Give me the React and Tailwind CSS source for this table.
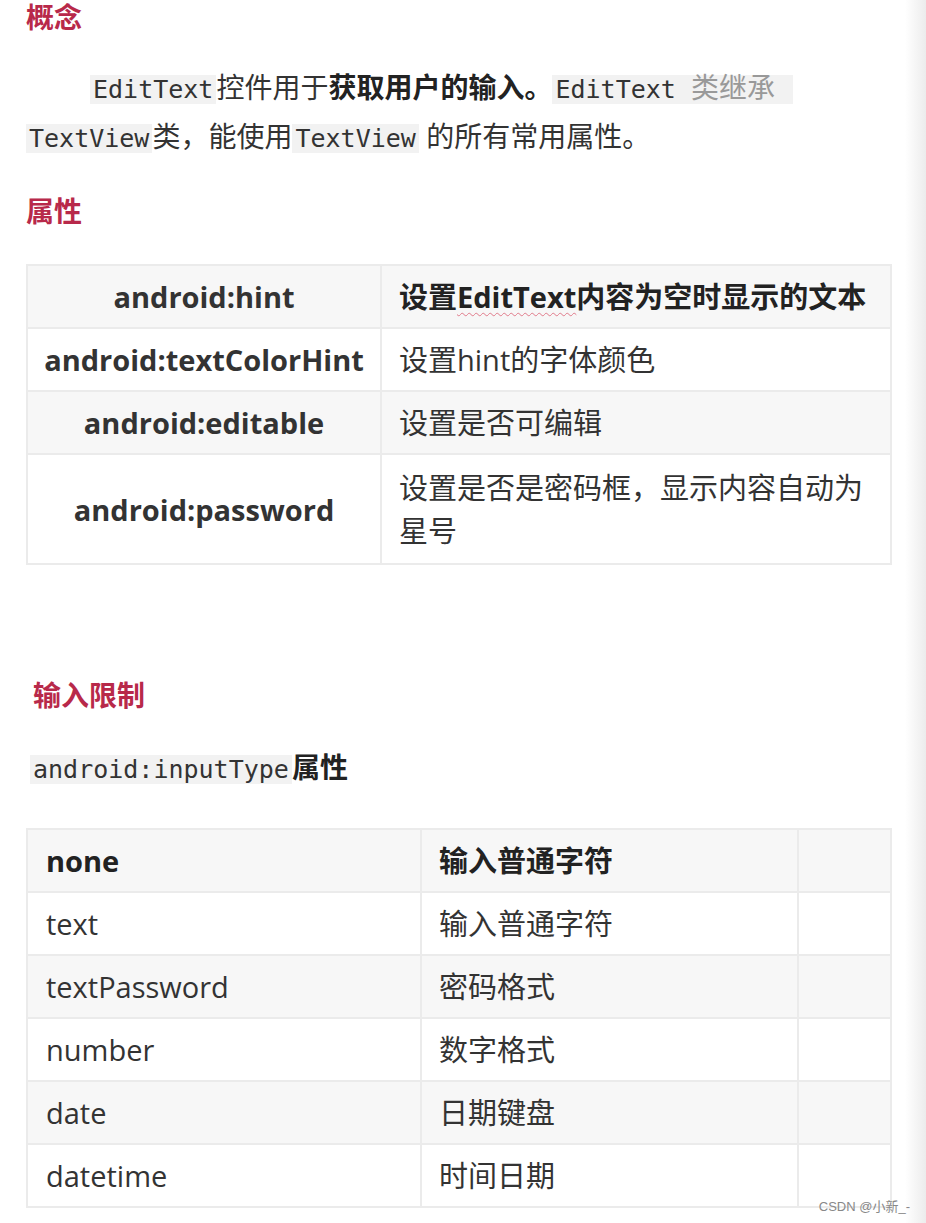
import React from "react";

const cjk = '"Open Sans", "Noto Sans CJK SC", sans-serif';
const mono = '"DejaVu Sans Mono", "Noto Sans CJK SC", monospace';

const attrRows = [
    { name: "android:textColorHint", desc: "设置hint的字体颜色" },
    { name: "android:editable", desc: "设置是否可编辑" },
    { name: "android:password", desc: "设置是否是密码框，显示内容自动为星号", tall: true },
];

const typeRows = [
    ["text", "输入普通字符"],
    ["textPassword", "密码格式"],
    ["number", "数字格式"],
    ["date", "日期键盘"],
    ["datetime", "时间日期"],
];

function Heading({ children, className = "" }) {
    return (
        <h2 className={`text-[28px] leading-[34px] font-bold text-[#b8294a] ${className}`}>
            {children}
        </h2>
    );
}

function Code({ children }) {
    return (
        <span className="bg-[#f2f2f2] px-[3px] text-[25px] text-[#333]" style={{ fontFamily: mono }}>
            {children}
        </span>
    );
}

export default function App() {
    return (
        <div className="relative flex min-h-[1223px] w-[926px] bg-white text-[#333]" style={{ fontFamily: cjk }}>
            <main className="w-[905px] shrink-0 pl-[26px]">
                {/* 概念 */}
                <Heading>概念</Heading>
                <p className="mt-[30px] text-[28px] leading-[47px] indent-[64px]">
                    <Code>EditText</Code>控件用于<b className="font-bold text-[#222]">获取用户的输入。</b>
                    <span className="bg-[#f2f2f2] px-[3px] text-[25px]" style={{ fontFamily: mono }}>
                        EditText <span className="text-[28px] text-[#999]" style={{ fontFamily: cjk }}>类继承</span>&nbsp;
                    </span>
                    <br />
                    <Code>TextView</Code>类，能使用<Code>TextView</Code> 的所有常用属性。
                </p>

                {/* 属性 */}
                <Heading className="mt-[32px]">属性</Heading>
                <table className="mt-[36px] w-[866px] border-collapse text-[29px] leading-[43px]">
                    <tbody>
                        <tr className="bg-[#f7f7f7]">
                            <td className="w-[354px] border-2 border-[#ebebeb] py-[9px] text-center font-bold text-[#333]">
                                android:hint
                            </td>
                            <td className="border-2 border-[#ebebeb] px-[17px] py-[9px] font-bold text-[#222]">
                                设置
                                <span className="underline decoration-wavy decoration-[#e07a8a] decoration-1 underline-offset-4">
                                    EditText
                                </span>
                                内容为空时显示的文本
                            </td>
                        </tr>
                        {attrRows.map((row, i) => (
                            <tr key={row.name} className={i % 2 === 1 ? "bg-[#f7f7f7]" : "bg-white"}>
                                <td className="border-2 border-[#ebebeb] py-[9px] text-center font-bold text-[#333]">
                                    {row.name}
                                </td>
                                <td className={`border-2 border-[#ebebeb] px-[17px] ${row.tall ? "py-[11px]" : "py-[9px]"}`}>
                                    {row.desc}
                                </td>
                            </tr>
                        ))}
                    </tbody>
                </table>

                {/* 输入限制 */}
                <Heading className="mt-[113px] pl-[7px]">输入限制</Heading>
                <p className="mt-[35px] pl-[4px] text-[28px] leading-[40px]">
                    <Code>android:inputType</Code>
                    <span className="font-bold text-[#222]">属性</span>
                </p>

                <table className="mt-[38px] w-[866px] border-collapse text-[29px] leading-[43px]">
                    <tbody>
                        <tr className="bg-[#f7f7f7] font-bold text-[#222]">
                            <td className="w-[394px] border-2 border-[#ebebeb] px-[18px] py-[9px]">none</td>
                            <td className="w-[377px] border-2 border-[#ebebeb] px-[17px] py-[9px]">输入普通字符</td>
                            <td className="border-2 border-[#ebebeb]"></td>
                        </tr>
                        {typeRows.map(([type, desc], i) => (
                            <tr key={type} className={i % 2 === 1 ? "bg-[#f7f7f7]" : "bg-white"}>
                                <td className="border-2 border-[#ebebeb] px-[18px] py-[9px]">{type}</td>
                                <td className="border-2 border-[#ebebeb] px-[17px] py-[9px]">{desc}</td>
                                <td className="border-2 border-[#ebebeb]"></td>
                            </tr>
                        ))}
                    </tbody>
                </table>
            </main>

            {/* right edge shade */}
            <div className="flex-1 bg-gradient-to-r from-white to-[#ececec]" />

            <span
                className="absolute right-[16px] top-[1198px] text-[13px] leading-[18px] text-[#888]"
                style={{ fontFamily: '"Liberation Sans", "Noto Sans CJK SC", sans-serif' }}
            >
                CSDN @小新_-
            </span>
        </div>
    );
}
